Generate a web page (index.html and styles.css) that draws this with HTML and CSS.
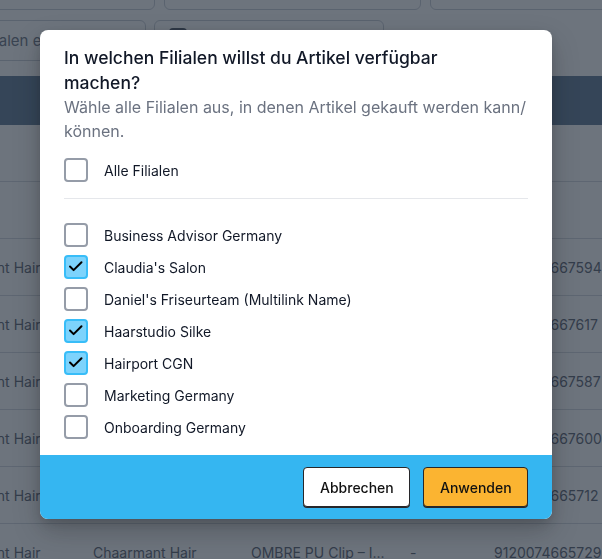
FILE: index.html
```html
<!DOCTYPE html>
<html lang="de">
<head>
<meta charset="utf-8">
<title>Filialen</title>
<link rel="stylesheet" href="styles.css">
</head>
<body>
<div class="page">
  <div class="filters filters-top">
    <div class="fbox fb1"></div>
    <div class="fbox fb2"></div>
    <div class="fbox fb3"></div>
  </div>
  <div class="filters filters-second">
    <div class="fbox sb1"><span class="ftext">Filialen einschränken</span></div>
    <div class="fbox sb2"><span class="mini-check"></span></div>
  </div>
  <div class="table">
    <div class="thead"></div>
    <div class="trow"></div>
    <div class="trow"></div>
    <div class="trow"><span>Chaarmant Hair</span><span>Chaarmant Hair</span><span>OMBRE PU Clip – I...</span><span>-</span><span>9120074667594</span></div>
    <div class="trow"><span>Chaarmant Hair</span><span>Chaarmant Hair</span><span>OMBRE PU Clip – I...</span><span>-</span><span>9120074667617</span></div>
    <div class="trow"><span>Chaarmant Hair</span><span>Chaarmant Hair</span><span>OMBRE PU Clip – I...</span><span>-</span><span>9120074667587</span></div>
    <div class="trow"><span>Chaarmant Hair</span><span>Chaarmant Hair</span><span>OMBRE PU Clip – I...</span><span>-</span><span>9120074667600</span></div>
    <div class="trow"><span>Chaarmant Hair</span><span>Chaarmant Hair</span><span>OMBRE PU Clip – I...</span><span>-</span><span>9120074665712</span></div>
    <div class="trow"><span>Chaarmant Hair</span><span>Chaarmant Hair</span><span>OMBRE PU Clip – I...</span><span>-</span><span>9120074665729</span></div>
  </div>
</div>

<div class="overlay">
  <div class="modal">
    <div class="modal-body">
      <h2 class="title">In welchen Filialen willst du Artikel verfügbar machen?</h2>
      <p class="subtitle">Wähle alle Filialen aus, in denen Artikel gekauft werden kann/ können.</p>
      <label class="opt opt-all"><span class="box"></span><span class="lbl">Alle Filialen</span></label>
      <div class="divider"></div>
      <div class="list">
        <label class="opt"><span class="box"></span><span class="lbl">Business Advisor Germany</span></label>
        <label class="opt"><span class="box checked"><svg viewBox="0 0 24 24" width="24" height="24"><path d="M6 11.5l3.6 3.6L17.5 7.2" fill="none" stroke="#000" stroke-width="2" stroke-linecap="round" stroke-linejoin="round"/></svg></span><span class="lbl">Claudia's Salon</span></label>
        <label class="opt"><span class="box"></span><span class="lbl">Daniel's Friseurteam (Multilink Name)</span></label>
        <label class="opt"><span class="box checked"><svg viewBox="0 0 24 24" width="24" height="24"><path d="M6 11.5l3.6 3.6L17.5 7.2" fill="none" stroke="#000" stroke-width="2" stroke-linecap="round" stroke-linejoin="round"/></svg></span><span class="lbl">Haarstudio Silke</span></label>
        <label class="opt"><span class="box checked"><svg viewBox="0 0 24 24" width="24" height="24"><path d="M6 11.5l3.6 3.6L17.5 7.2" fill="none" stroke="#000" stroke-width="2" stroke-linecap="round" stroke-linejoin="round"/></svg></span><span class="lbl">Hairport CGN</span></label>
        <label class="opt"><span class="box"></span><span class="lbl">Marketing Germany</span></label>
        <label class="opt"><span class="box"></span><span class="lbl">Onboarding Germany</span></label>
      </div>
    </div>
    <div class="modal-footer">
      <button class="btn btn-cancel">Abbrechen</button>
      <button class="btn btn-apply">Anwenden</button>
    </div>
  </div>
</div>
</body>
</html>
```

FILE: styles.css
```css
* { box-sizing: border-box; }
html, body { margin: 0; padding: 0; }
body {
  width: 602px;
  height: 559px;
  overflow: hidden;
  background: #ffffff;
  font-family: Inter, "Noto Sans", "Liberation Sans", sans-serif;
}
.page {
  width: 602px;
  height: 559px;
  overflow: hidden;
}
.filters {
  display: flex;
}
.filters-top {
  gap: 9px;
  margin-left: -100px;
  margin-top: -30px;
  height: 40px;
}
.fbox {
  border: 1px solid #c9ced6;
  border-radius: 6px;
  background: #ffffff;
  flex: none;
}
.fb1 { width: 255px; }
.fb2 { width: 257px; }
.fb3 { width: 300px; }
.filters-second {
  gap: 8px;
  margin-left: -100px;
  margin-top: 10px;
  height: 41px;
}
.sb1 {
  width: 246px;
  display: flex;
  align-items: center;
  padding-left: 78px;
  overflow: hidden;
}
.ftext {
  font-size: 15px;
  color: #6b7280;
  white-space: nowrap;
}
.sb2 {
  width: 230px;
  padding: 7px 0 0 14px;
}
.mini-check {
  display: block;
  width: 18px;
  height: 18px;
  border-radius: 4px;
  background: #4b5563;
}
.table {
  margin-top: 15px;
}
.thead {
  height: 49px;
  background: #5f7a95;
}
.trow {
  height: 57px;
  border-bottom: 1px solid #d4d8de;
  display: grid;
  grid-template-columns: 156px 158px 159px 84px 140px;
  margin-left: -63px;
  align-items: center;
  font-size: 14px;
  color: #5b6270;
  white-space: nowrap;
}
.trow:first-of-type { height: 56px; }
.trow span { overflow: hidden; text-overflow: clip; }

/* overlay + modal */
.overlay {
  position: fixed;
  inset: 0;
  background: rgba(31, 41, 55, 0.65);
  padding: 30px 0 0 40px;
}
.modal {
  width: 512px;
  background: #ffffff;
  border-radius: 8px;
  overflow: hidden;
  box-shadow: 0 12px 28px rgba(0, 0, 0, 0.22), 0 4px 10px rgba(0, 0, 0, 0.12);
}
.modal-body {
  padding: 15px 24px 16px 24px;
}
.title {
  margin: 0;
  padding-right: 40px;
  font-size: 17.5px;
  line-height: 25px;
  font-weight: 500;
  color: #111827;
}
.subtitle {
  margin: 0;
  font-size: 16px;
  line-height: 24px;
  color: #6b7280;
}
.opt {
  display: flex;
  align-items: center;
  gap: 16px;
  height: 24px;
}
.opt-all { margin-top: 15px; }
.box {
  width: 24px;
  height: 24px;
  flex: none;
  border: 2px solid #959ca8;
  border-radius: 4px;
  background: #ffffff;
  position: relative;
}
.box.checked {
  background: #7dd3fc;
  border-color: #38bdf8;
}
.box svg {
  position: absolute;
  left: -2px;
  top: -2px;
}
.lbl {
  font-size: 14px;
  color: #111827;
}
.divider {
  height: 1px;
  background: #e5e7eb;
  margin: 16px 0 24px 0;
}
.list {
  display: flex;
  flex-direction: column;
  gap: 8px;
}
.modal-footer {
  background: #35b6f1;
  padding: 12px 24px;
  display: flex;
  justify-content: flex-end;
  gap: 13px;
}
.btn {
  height: 40px;
  padding: 0 16px;
  border: 1px solid #27272a;
  border-radius: 4px;
  font-family: Inter, "Noto Sans", "Liberation Sans", sans-serif;
  font-size: 14px;
  font-weight: 500;
  color: #111111;
  box-shadow: 0 1px 0 #27272a;
}
.btn-cancel { background: #ffffff; width: 107px; }
.btn-apply { background: #fbb431; width: 105px; }
```
